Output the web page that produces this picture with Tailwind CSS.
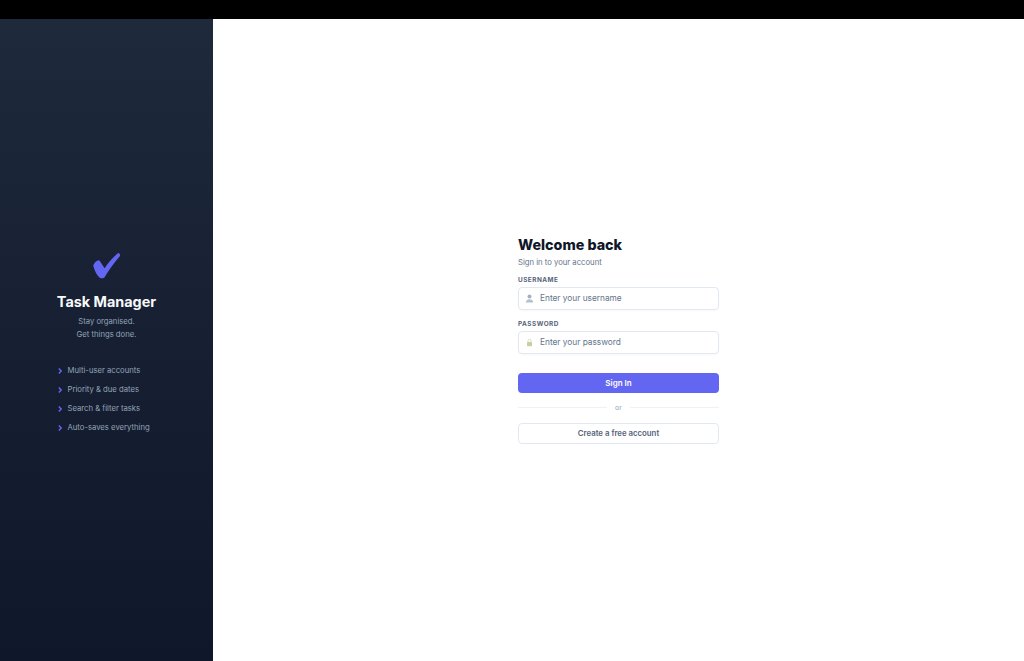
<!DOCTYPE html>
<html lang="en">
<head>
<meta charset="UTF-8">
<meta name="viewport" content="width=device-width, initial-scale=1.0">
<script src="https://cdn.jsdelivr.net/npm/@tailwindcss/browser@4"></script>
<title>Task Manager</title>
</head>
<body class="bg-black font-['Inter',sans-serif] h-[661px] overflow-hidden">
<div class="h-[19px] bg-black"></div>
<div class="flex h-[642px]">
  <!-- sidebar -->
  <aside class="w-[213px] shrink-0 bg-gradient-to-b from-[#1e293b] to-[#0f172a] flex flex-col items-center pt-[233px]">
    <svg class="w-[30px] h-[27px]" viewBox="0 0 30 27"><path d="M1.2 13.6 C2 11 4.5 8.6 6.2 8.2 C7.2 8 7.8 8.8 8.8 10.5 L12.6 16.2 C16 11 21 5 26 1.2 C27.2 .6 28.6 2.8 27.8 4.2 C22 10.5 17 18 12.6 25.2 C11.6 26.6 9 26.6 7.4 25.4 C5.2 23.8 2.4 18.5 1.2 13.6 Z" fill="#6366f1"/></svg>
    <h1 class="mt-[13px] text-[14.4px] leading-[20px] font-bold text-[#f8fafc]">Task Manager</h1>
    <p class="mt-[3px] text-[7.7px] leading-[13px] text-[#94a3b8] text-center">Stay organised.<br>Get things done.</p>
    <ul class="mt-[23px] w-full pl-[58px] flex flex-col gap-[5px] text-[7.7px] leading-[14px] text-[#94a3b8]">
      <li class="flex items-center gap-[5.5px]"><svg class="w-[4px] h-[6px]" viewBox="0 0 4 6"><path d="M.8 .6 3.2 3 .8 5.4" fill="none" stroke="#6366f1" stroke-width="1.4"/></svg>Multi-user accounts</li>
      <li class="flex items-center gap-[5.5px]"><svg class="w-[4px] h-[6px]" viewBox="0 0 4 6"><path d="M.8 .6 3.2 3 .8 5.4" fill="none" stroke="#6366f1" stroke-width="1.4"/></svg>Priority &amp; due dates</li>
      <li class="flex items-center gap-[5.5px]"><svg class="w-[4px] h-[6px]" viewBox="0 0 4 6"><path d="M.8 .6 3.2 3 .8 5.4" fill="none" stroke="#6366f1" stroke-width="1.4"/></svg>Search &amp; filter tasks</li>
      <li class="flex items-center gap-[5.5px]"><svg class="w-[4px] h-[6px]" viewBox="0 0 4 6"><path d="M.8 .6 3.2 3 .8 5.4" fill="none" stroke="#6366f1" stroke-width="1.4"/></svg>Auto-saves everything</li>
    </ul>
  </aside>
  <!-- form -->
  <main class="flex-1 bg-white flex justify-center pt-[217px]">
    <div class="w-[201px]">
      <h2 class="text-[14.3px] leading-[18px] font-extrabold text-[#0f172a]">Welcome back</h2>
      <p class="mt-[3px] text-[7.7px] leading-[12px] text-[#64748b]">Sign in to your account</p>
      <label class="block mt-[6px] text-[6.4px] leading-[10px] font-bold tracking-[0.5px] text-[#56637a]">USERNAME</label>
      <div class="mt-[2px] h-[23px] border border-[#e2e8f0] rounded-[4px] flex items-center pl-[6px] shadow-[0_1px_2px_rgba(0,0,0,0.03)]">
        <svg class="w-[9px] h-[9px]" viewBox="0 0 9 9"><circle cx="4.5" cy="2.6" r="2" fill="#a3b0c2"/><path d="M.8 8.5C1 6 2.5 5.2 4.5 5.2S8 6 8.2 8.5Z" fill="#b4c0d0"/></svg>
        <span class="ml-[6px] text-[8.3px] text-[#64748b]">Enter your username</span>
      </div>
      <label class="block mt-[9px] text-[6.4px] leading-[10px] font-bold tracking-[0.5px] text-[#56637a]">PASSWORD</label>
      <div class="mt-[2px] h-[23px] border border-[#e2e8f0] rounded-[4px] flex items-center pl-[6px] shadow-[0_1px_2px_rgba(0,0,0,0.03)]">
        <svg class="w-[9px] h-[9px]" viewBox="0 0 9 9"><path d="M3 4V2.8a1.5 1.5 0 0 1 3 0V4" fill="none" stroke="#cbd5c0" stroke-width=".8"/><rect x="2" y="4" width="5" height="4.2" rx=".6" fill="#c8cf9f"/></svg>
        <span class="ml-[6px] text-[8.3px] text-[#64748b]">Enter your password</span>
      </div>
      <button class="mt-[19px] w-full h-[20px] rounded-[4px] bg-[#6366f1] text-white text-[8px] font-semibold">Sign In</button>
      <div class="mt-[9px] flex items-center gap-[8px] text-[7px] leading-[12px] text-[#94a3b8]">
        <div class="flex-1 h-px mb-[2px] bg-[#eef1f5]"></div>or<div class="flex-1 h-px mb-[2px] bg-[#eef1f5]"></div>
      </div>
      <button class="mt-[9px] w-full h-[21px] rounded-[4px] border border-[#e2e8f0] bg-white text-[#56637a] text-[7.8px] font-semibold">Create a free account</button>
    </div>
  </main>
</div>
</body>
</html>
